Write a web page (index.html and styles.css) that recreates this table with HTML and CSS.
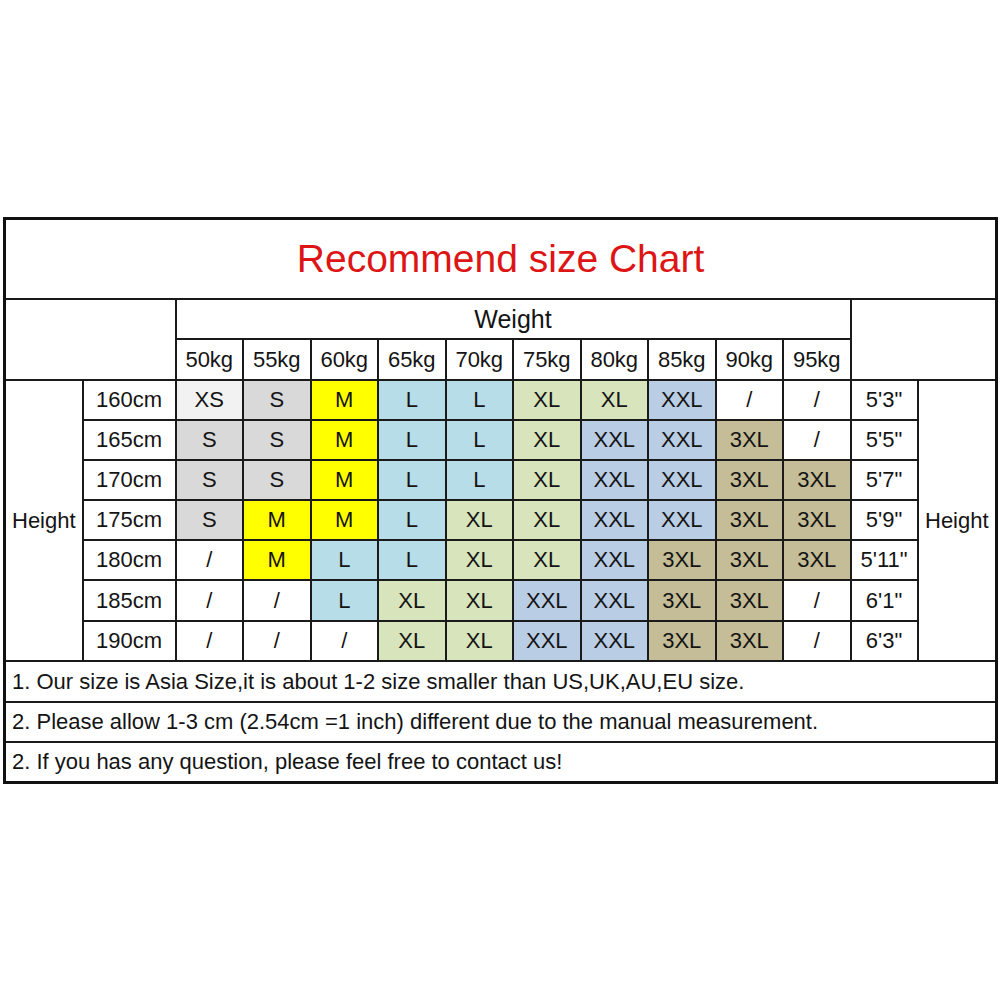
FILE: index.html
```html
<!DOCTYPE html>
<html>
<head>
<meta charset="utf-8">
<link rel="stylesheet" href="styles.css">
</head>
<body>
<div class="page">
<table class="chart">
  <colgroup>
    <col class="c-lab"><col class="c-cm">
    <col class="c-w"><col class="c-w"><col class="c-w"><col class="c-w"><col class="c-w">
    <col class="c-w"><col class="c-w"><col class="c-w"><col class="c-w"><col class="c-w">
    <col class="c-ft"><col class="c-lab2">
  </colgroup>
  <tr class="r-title"><td colspan="14" class="title">Recommend size Chart</td></tr>
  <tr class="r-head"><td colspan="2" rowspan="2"></td><td colspan="10" class="weight">Weight</td><td colspan="2" rowspan="2"></td></tr>
  <tr class="r-head2"><td>50kg</td><td>55kg</td><td>60kg</td><td>65kg</td><td>70kg</td><td>75kg</td><td>80kg</td><td>85kg</td><td>90kg</td><td>95kg</td></tr>
  <tr><td rowspan="7" class="hl">Height</td><td>160cm</td><td class="xs">XS</td><td class="s">S</td><td class="m">M</td><td class="l">L</td><td class="l">L</td><td class="xl">XL</td><td class="xl">XL</td><td class="xxl">XXL</td><td>/</td><td>/</td><td>5'3"</td><td rowspan="7" class="hr">Height</td></tr>
  <tr><td>165cm</td><td class="s">S</td><td class="s">S</td><td class="m">M</td><td class="l">L</td><td class="l">L</td><td class="xl">XL</td><td class="xxl">XXL</td><td class="xxl">XXL</td><td class="x3">3XL</td><td>/</td><td>5'5"</td></tr>
  <tr><td>170cm</td><td class="s">S</td><td class="s">S</td><td class="m">M</td><td class="l">L</td><td class="l">L</td><td class="xl">XL</td><td class="xxl">XXL</td><td class="xxl">XXL</td><td class="x3">3XL</td><td class="x3">3XL</td><td>5'7"</td></tr>
  <tr><td>175cm</td><td class="s">S</td><td class="m">M</td><td class="m">M</td><td class="l">L</td><td class="xl">XL</td><td class="xl">XL</td><td class="xxl">XXL</td><td class="xxl">XXL</td><td class="x3">3XL</td><td class="x3">3XL</td><td>5'9"</td></tr>
  <tr><td>180cm</td><td>/</td><td class="m">M</td><td class="l">L</td><td class="l">L</td><td class="xl">XL</td><td class="xl">XL</td><td class="xxl">XXL</td><td class="x3">3XL</td><td class="x3">3XL</td><td class="x3">3XL</td><td>5'11"</td></tr>
  <tr class="r-tall"><td>185cm</td><td>/</td><td>/</td><td class="l">L</td><td class="xl">XL</td><td class="xl">XL</td><td class="xxl">XXL</td><td class="xxl">XXL</td><td class="x3">3XL</td><td class="x3">3XL</td><td>/</td><td>6'1"</td></tr>
  <tr><td>190cm</td><td>/</td><td>/</td><td>/</td><td class="xl">XL</td><td class="xl">XL</td><td class="xxl">XXL</td><td class="xxl">XXL</td><td class="x3">3XL</td><td class="x3">3XL</td><td>/</td><td>6'3"</td></tr>
  <tr class="r-note r-tall"><td colspan="14" class="note">1. Our size is Asia Size,it is about 1-2 size smaller than US,UK,AU,EU size.</td></tr>
  <tr class="r-note"><td colspan="14" class="note">2. Please allow 1-3 cm (2.54cm =1 inch) different due to the manual measurement.</td></tr>
  <tr class="r-note"><td colspan="14" class="note">2. If you has any question, please feel free to contact us!</td></tr>
</table>
</div>
</body>
</html>
```
FILE: styles.css
```css
html, body {
  margin: 0;
  padding: 0;
  background: #fff;
}
.page {
  padding: 217px 0 0 3px;
}
.chart {
  border-collapse: collapse;
  table-layout: fixed;
  width: 992px;
  border: 3px solid #111;
  font-family: "Liberation Sans", Arial, sans-serif;
  font-size: 22px;
  color: #141414;
}
.c-lab { width: 78px; }
.c-cm { width: 93px; }
.c-w { width: 67.5px; }
.c-ft { width: 67px; }
.c-lab2 { width: 79px; }
.chart td {
  border: 2px solid #1a1a1a;
  padding: 0;
  height: 38px;
  text-align: center;
  vertical-align: middle;
  white-space: nowrap;
  overflow: hidden;
}
.chart .r-title td {
  height: 78px;
}
.chart .r-head2 td {
  height: 39px;
}
.chart .r-tall td {
  height: 39px;
}
.title {
  color: #dd1515;
  font-size: 39px;
}
.weight {
  font-size: 25px;
}
.hl {
  text-align: left !important;
  padding-left: 6px !important;
}
.hr {
  text-align: center;
}
.note {
  text-align: left !important;
  padding-left: 6px !important;
  font-size: 22px;
}
.xs { background: #f2f2f2; }
.s { background: #d9d9d9; }
.m { background: #ffff00; }
.l { background: #b7dde8; }
.xl { background: #d7e4bc; }
.xxl { background: #b9cde5; }
.x3 { background: #c4bd97; }
```
